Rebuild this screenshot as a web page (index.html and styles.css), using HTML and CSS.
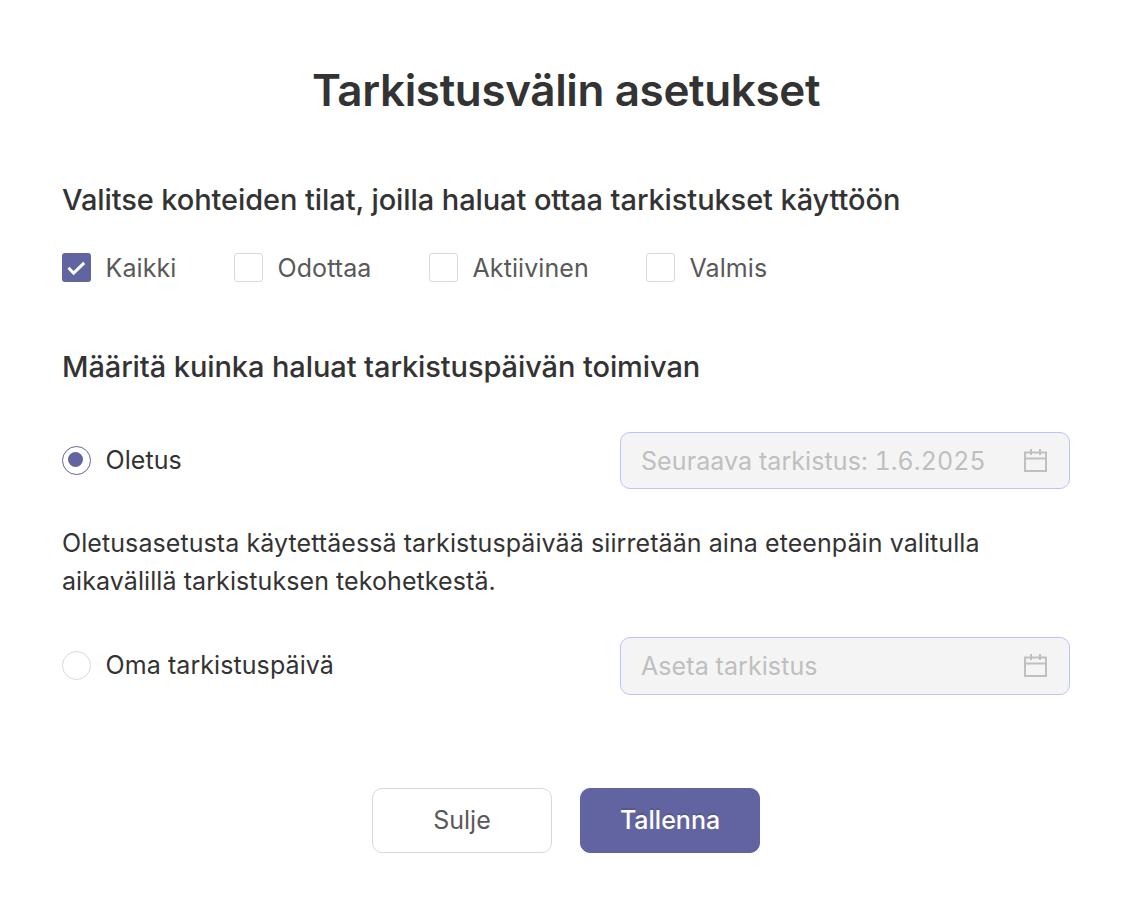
FILE: index.html
```html
<!DOCTYPE html>
<html lang="fi">
  <head>
    <meta charset="UTF-8" />
    <title>Tarkistusvälin asetukset</title>
    <link rel="stylesheet" href="styles.css">
  </head>

  <body>
    <div class="modal">
      <h1 class="title">Tarkistusvälin asetukset</h1>

      <h2 class="subtitle">Valitse kohteiden tilat, joilla haluat ottaa tarkistukset käyttöön</h2>
      <div class="checkboxGroup">
        <label class="checkbox all">
          <span class="box checked">
            <svg width="29" height="29" viewBox="0 0 29 29"><path d="M6.5 14.8l5.1 5.4L22.2 9.9" /></svg>
          </span>
          <span>Kaikki</span>
        </label>
        <label class="checkbox waiting"><span class="box"></span><span>Odottaa</span></label>
        <label class="checkbox active"><span class="box"></span><span>Aktiivinen</span></label>
        <label class="checkbox"><span class="box"></span><span>Valmis</span></label>
      </div>

      <h2 class="subtitle">Määritä kuinka haluat tarkistuspäivän toimivan</h2>
      <div class="optionRow">
        <label class="radio"><span class="circle selected"></span><span class="radioText">Oletus</span></label>
        <div class="datePicker">
          <span>Seuraava tarkistus: 1.6.2025</span>
          <svg class="calendar" width="23" height="23" viewBox="0 0 23 23">
            <path d="M1 3.4h21v18.5H1zM1 9.4h21M7 0v6M16 0v6" />
          </svg>
        </div>
      </div>

      <p class="description">Oletusasetusta käytettäessä tarkistuspäivää siirretään aina eteenpäin valitulla aikavälillä tarkistuksen tekohetkestä.</p>

      <div class="optionRow custom">
        <label class="radio"><span class="circle"></span><span class="radioText">Oma tarkistuspäivä</span></label>
        <div class="datePicker">
          <span>Aseta tarkistus</span>
          <svg class="calendar" width="23" height="23" viewBox="0 0 23 23">
            <path d="M1 3.4h21v18.5H1zM1 9.4h21M7 0v6M16 0v6" />
          </svg>
        </div>
      </div>

      <div class="buttons">
        <button class="button close">Sulje</button>
        <button class="button save">Tallenna</button>
      </div>
    </div>
  </body>
</html>
```
FILE: styles.css
```css
body,
h1,
h2,
p {
  margin: 0;
  padding: 0;
}

body {
  background: #ffffff;
  color: #333333;
  font-family: Inter, sans-serif;
  font-size: 25px;
}

.modal {
  padding: 61px 60px 0 62px;
}

.title {
  height: 58px;
  line-height: 58px;
  font-size: 44px;
  font-weight: 600;
  letter-spacing: -0.37px;
  text-align: center;
}

.subtitle {
  height: 40px;
  margin-top: 61px;
  line-height: 40px;
  font-size: 29px;
  font-weight: 500;
  letter-spacing: -0.09px;
}

.checkboxGroup {
  display: flex;
  height: 39px;
  margin-top: 28px;
  margin-bottom: 60px;
  color: #595959;
}

.checkboxGroup + .subtitle {
  margin-top: 0;
}

.checkbox,
.radio {
  display: flex;
  align-items: center;
  gap: 14.5px;
  letter-spacing: 0.08px;
}

.radio {
  height: 57px;
  line-height: 28px;
}

.radioText {
  padding-bottom: 2px;
}

.all {
  width: 172px;
}

.waiting {
  width: 195px;
}

.active {
  width: 217px;
}

.box,
.circle {
  box-sizing: border-box;
  width: 29px;
  height: 29px;
  border: 1px solid #d9d9d9;
}

.box {
  border-radius: 3px;
}

.checked {
  display: flex;
  border: none;
  background: #6264a2;
}

.checked path {
  fill: none;
  stroke: #ffffff;
  stroke-width: 3;
}

.circle {
  border-radius: 50%;
}

.selected {
  display: flex;
  padding: 5px;
  border-color: #6264a2;
}

.selected::after {
  content: '';
  width: 15px;
  height: 15px;
  border-radius: 50%;
  background: #6264a2;
}

.optionRow {
  display: flex;
  justify-content: space-between;
  height: 57px;
  margin-top: 45px;
}

.custom {
  height: 58px;
  margin-top: 37px;
}

.datePicker {
  display: flex;
  align-items: center;
  justify-content: space-between;
  box-sizing: border-box;
  width: 450px;
  padding: 0 22px 0 20px;
  border: 1px solid #bdc3f7;
  border-radius: 10px;
  background: #f4f4f4;
  color: #bfbfbf;
  font-variant-numeric: tabular-nums;
  letter-spacing: 0.08px;
}

.calendar {
  fill: none;
  stroke: #bfbfbf;
  stroke-width: 2;
}

.custom .calendar {
  margin-bottom: 1px;
}

.description {
  margin-top: 35px;
  line-height: 38px;
  letter-spacing: 0.08px;
}

.buttons {
  display: flex;
  justify-content: center;
  gap: 28px;
  margin-top: 93px;
}

.button {
  box-sizing: border-box;
  width: 180px;
  height: 65px;
  padding-bottom: 3px;
  border: 1px solid #d9d9d9;
  border-radius: 10px;
  background: #ffffff;
  color: #595959;
  font-family: inherit;
  font-size: 25px;
}

.save {
  border-color: #6264a2;
  background: #6264a2;
  color: #ffffff;
  font-weight: 500;
  text-shadow: 0 -2px 0 rgba(0, 0, 0, 0.12);
}
```
